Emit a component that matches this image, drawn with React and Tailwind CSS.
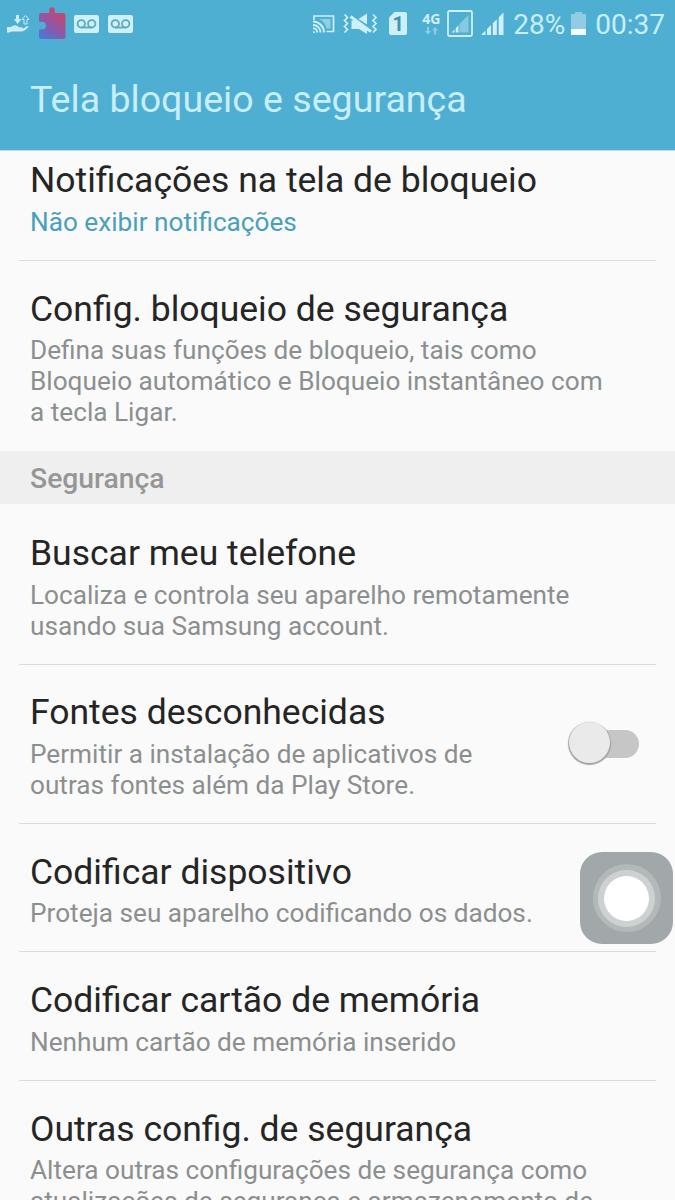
import React, { useState } from "react";

// Status bar, left side
const TransferIcon = () => (
  <svg className="ml-[7px]" width="23" height="20" viewBox="0 0 23 20">
    <g fill="#c9eef9">
      <path d="M9 1h3v4h2.500L10.500 10 7 5h2z" />
      <path d="M0 13h4c3-2.600 6-2 8 .3h3c1.200.4 1 1.700-.2 2H10l6-.6 4-2.700c1.500-.4 1.800.8 1 1.600-2 2.200-4 3.800-6.500 4H5l-3 1H0z" />
    </g>
    <path d="M18.500 1.500l3.500 4h-2V10h-3V5.500h-2z" fill="none" stroke="#c9eef9" strokeWidth="1" />
  </svg>
);

const PuzzleIcon = () => (
  <svg className="ml-[8px]" width="28" height="34" viewBox="0 0 28 34">
    <defs>
      <linearGradient id="puzzle" x1="0.15" y1="1" x2="0.7" y2="0.15">
        <stop offset="0" stopColor="#4a78d8" />
        <stop offset="0.5" stopColor="#8d58a8" />
        <stop offset="1" stopColor="#bd4a78" />
      </linearGradient>
    </defs>
    <path
      d="M3 6h7c1 0 1.200-.5 1.200-1.500V3a2.800 2.800 0 0 1 5.600 0v1.500c0 1 .3 1.500 1.300 1.500H25a2.500 2.500 0 0 1 2.500 2.500V29.500a2.500 2.500 0 0 1-2.500 2.500H3.500A2.500 2.500 0 0 1 1 29.500v-7h3a3.900 3.900 0 0 0 0-7.800H1V8.500A2.500 2.500 0 0 1 3 6z"
      fill="url(#puzzle)"
    />
  </svg>
);

const VoicemailIcon = ({ className }) => (
  <svg className={className} width="25" height="18" viewBox="0 0 25 18">
    <rect width="25" height="18" rx="2" fill="#cdf0fa" />
    <g fill="none" stroke="#5fa9c0" strokeWidth="1.800">
      <circle cx="7.300" cy="8.800" r="3.700" />
      <circle cx="17.700" cy="8.800" r="3.700" />
      <path d="M7.300 12.500h10.400" />
    </g>
  </svg>
);

// Status bar, right side
const CastIcon = () => (
  <svg width="22" height="18" viewBox="0 0 22 18" fill="none" stroke="#cdf0fa">
    <path d="M1 5V1h19.500v15.500h-7" strokeWidth="1.700" />
    <path d="M6 4h11.500v9.500h-4C12.500 9 10 5.500 6 4z" fill="#8fd0e6" stroke="none" />
    <path d="M0 6.500A11 11 0 0 1 11 17.500M0 10a7.500 7.500 0 0 1 7.500 7.500M0 13.300a4.200 4.200 0 0 1 4.200 4.200" strokeWidth="1.900" />
    <path d="M0 16v2h2a2 2 0 0 0-2-2z" fill="#cdf0fa" stroke="none" />
  </svg>
);

const MuteIcon = () => (
  <svg className="ml-[8px]" width="36" height="22" viewBox="0 0 36 22">
    <g fill="none" stroke="#cdf0fa" strokeWidth="1.700">
      <path d="M1.500 1.500l3 3-3 3 3 3-3 3 3 3-3 3" />
      <path d="M30 1.500l3 3-3 3 3 3-3 3 3 3-3 3" />
    </g>
    <path d="M15.500 6L24 .5v11zM8.500 7.500H13L26 17.500h-2V21L16 16H8.500z" fill="#cdf0fa" />
    <path d="M7.500 3.500L28 18.500" stroke="#cdf0fa" strokeWidth="3" />
    <path d="M11 3.500L29 16.700" stroke="#4fafd2" strokeWidth="0.800" />
  </svg>
);

const SimIcon = () => (
  <div className="relative ml-[10px] flex h-[23px] w-[18px] items-center justify-center">
    <svg className="absolute inset-0" width="18" height="23" viewBox="0 0 18 23">
      <path d="M5.500 0H16a2 2 0 0 1 2 2v19a2 2 0 0 1-2 2H2a2 2 0 0 1-2-2V5.500z" fill="#cdf0fa" />
    </svg>
    <span className="relative text-[20px] leading-none font-bold text-[#4493ae]">1</span>
  </div>
);

const NetworkIcon = () => (
  <div className="ml-[15px] flex flex-col items-center">
    <span className="font-['Open_Sans'] text-[14px] leading-[14px] font-bold text-[#cdf0fa]">4G</span>
    <svg className="mt-[1px]" width="13" height="8" viewBox="0 0 13 8" fill="#8fcce2">
      <path d="M2 0h2v4h2L3 7.500 0 4h2zM9 7.500h2v-4h2L10 0 7 3.500h2z" />
    </svg>
  </div>
);

const BoxedSignalIcon = () => (
  <svg className="ml-[7px]" width="26" height="27" viewBox="0 0 26 27">
    <rect x="1" y="1" width="24" height="25" rx="1.500" fill="none" stroke="#cdf0fa" strokeWidth="1.800" />
    <path d="M12.500 14L21.500 5v17.500h-9z" fill="#87c9e1" />
    <path d="M4.500 22.500l3-3v3zM8.700 22.500V18.300l2.800-3v7.200z" fill="#cdf0fa" />
  </svg>
);

const SignalIcon = () => (
  <svg className="ml-[8px]" width="23" height="23" viewBox="0 0 23 23" fill="#cdf0fa">
    <path d="M0 23l4.500-4.500V23zM6 17l4-4v10H6zM11.800 11.200l4-4V23h-4zM17.700 5.300L22.500.5V23h-4.800z" />
  </svg>
);

const BatteryIcon = () => (
  <svg className="ml-[6px]" width="15" height="23" viewBox="0 0 15 23">
    <path d="M4 0h7v2h4v21H0V2h4z" fill="#90cde4" />
    <path d="M0 17h15v6H0z" fill="#f0fcff" />
  </svg>
);

const StatusBar = () => (
  <div className="flex h-[47px] items-center justify-between pr-[10px]">
    <div className="flex items-center">
      <TransferIcon />
      <PuzzleIcon />
      <VoicemailIcon className="ml-[8px]" />
      <VoicemailIcon className="ml-[9px]" />
    </div>
    <div className="flex items-center text-[28px] leading-none text-[#c8eefa]">
      <CastIcon />
      <MuteIcon />
      <SimIcon />
      <NetworkIcon />
      <BoxedSignalIcon />
      <SignalIcon />
      <span className="ml-[9px] pt-[2px]">28%</span>
      <BatteryIcon />
      <span className="ml-[9px] pt-[2px]">00:37</span>
    </div>
  </div>
);

const Toggle = ({ checked, onChange }) => (
  <button
    type="button"
    role="switch"
    aria-checked={checked}
    onClick={() => onChange(!checked)}
    className="mr-[17px] mb-[5px] relative flex h-[43px] w-[70px] shrink-0 items-center justify-end self-center"
  >
    <span className="h-[28px] w-[56px] rounded-full bg-[#c6c6c6]" />
    <span
      className={
        checked
          ? "absolute top-0 right-0 size-[41px] rounded-full bg-[#4fafd2] shadow-[0_1px_1px_1px_#9a9a9a]"
          : "absolute top-0 left-0 size-[41px] rounded-full bg-[#eaeaea] shadow-[0_1px_1px_1px_#a0a0a0]"
      }
    />
  </button>
);

const Row = ({ title, lines, linkColor, last, children }) => (
  <div
    className={
      last
        ? "mx-[19px] flex shrink-0 pt-[26.900px] pb-[22.500px] pl-[11px]"
        : "mx-[19px] flex shrink-0 border-b border-[#dcdcdc] pt-[26.900px] pb-[21.800px] pl-[11px]"
    }
  >
    <div className="flex-1 whitespace-nowrap">
      <h2 className="text-[35.500px] leading-[42px] text-[#252525]">{title}</h2>
      <div className={linkColor ? "mt-[5.700px] text-[26.200px] leading-[31px] text-[#4a9fbc]" : "mt-[5.700px] text-[26.200px] leading-[31px] text-[#8c8f8f]"}>
        {lines.map((line) => (
          <p key={line}>{line}</p>
        ))}
      </div>
    </div>
    {children}
  </div>
);

const App = () => {
  // Unknown sources switch
  const [unknownSources, setUnknownSources] = useState(false);

  return (
    <div className="relative flex h-[1200px] w-[675px] flex-col overflow-hidden bg-[#fafafa] font-[Roboto,sans-serif]">
      <header className="relative z-10 h-[151px] shrink-0 border-b border-[#b9dbe7] bg-[#4fafd2]">
        <StatusBar />
        <h1 className="mt-[29px] pl-[30px] text-[37.600px] leading-[46px] text-[#c8eefa]">Tela bloqueio e segurança</h1>
      </header>

      {/* The list is scrolled a little under the header */}
      <main className="-mt-[18.500px] flex flex-col">
        <Row title="Notificações na tela de bloqueio" lines={["Não exibir notificações"]} linkColor />
        <Row
          title="Config. bloqueio de segurança"
          lines={[
            "Defina suas funções de bloqueio, tais como",
            "Bloqueio automático e Bloqueio instantâneo com",
            "a tecla Ligar.",
          ]}
          last
        />
        <div className="mb-[1.200px] flex h-[53px] shrink-0 items-center bg-[#efefef] pt-[3px] pl-[30px] text-[28.300px] leading-none font-medium text-[#969696]">
          Segurança
        </div>
        <Row
          title="Buscar meu telefone"
          lines={["Localiza e controla seu aparelho remotamente", "usando sua Samsung account."]}
        />
        <Row
          title="Fontes desconhecidas"
          lines={["Permitir a instalação de aplicativos de", "outras fontes além da Play Store."]}
        >
          <Toggle checked={unknownSources} onChange={setUnknownSources} />
        </Row>
        <Row title="Codificar dispositivo" lines={["Proteja seu aparelho codificando os dados."]} />
        <Row title="Codificar cartão de memória" lines={["Nenhum cartão de memória inserido"]} />
        <Row
          title="Outras config. de segurança"
          lines={["Altera outras configurações de segurança como", "atualizações de segurança e armazenamento de"]}
          last
        />
      </main>

      {/* Floating assistive button */}
      <div className="absolute top-[852px] left-[580px] flex h-[92px] w-[93px] items-center justify-center rounded-[22px] bg-[#a2a8a9]">
        <div className="flex size-[68px] items-center justify-center rounded-full bg-[#b3b8b9]">
          <div className="flex size-[57px] items-center justify-center rounded-full bg-[#cdd1d1]">
            <div className="size-[45px] rounded-full bg-white" />
          </div>
        </div>
      </div>
    </div>
  );
};

export default App;
